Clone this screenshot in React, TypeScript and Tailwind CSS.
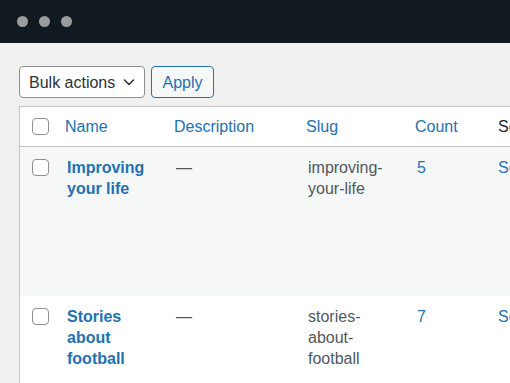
import React from "react";

interface iTerm {
  name: string[];
  slug: string[];
  count: number;
  shaded: boolean;
}

const terms: iTerm[] = [
  { name: ["Improving", "your life"], slug: ["improving-", "your-life"], count: 5, shaded: true },
  { name: ["Stories", "about", "football"], slug: ["stories-", "about-", "football"], count: 7, shaded: false },
];

const cols = "grid grid-cols-[36px_118px_132px_109px_83px_200px]";

const Checkbox = () => (
  <span className="block size-[17px] rounded-[4px] border border-[#8c8f94] bg-white" />
);

const App = () => {
  return (
    <div
      className="w-[510px] h-[383px] overflow-hidden bg-[#f0f0f1] text-[16px] leading-[21px] text-[#50575e]"
      style={{ fontFamily: '"Liberation Sans", Arial, sans-serif' }}
    >
      <div className="h-[43px] bg-[#111a20] flex items-center gap-[11px] pl-[17px]">
        <span className="size-[11px] rounded-full bg-[#9a9c9e]" />
        <span className="size-[11px] rounded-full bg-[#9a9c9e]" />
        <span className="size-[11px] rounded-full bg-[#9a9c9e]" />
      </div>

      <div className="pl-[19px] pt-[23px]">
        <div className="flex gap-[6px] h-[32px]">
          <div className="w-[126px] flex items-center justify-between pl-[9px] pr-[8px] rounded-[4px] border border-[#8c8f94] bg-white text-[#2c3338]">
            <span>Bulk actions</span>
            <svg width="14" height="14" viewBox="0 0 14 14" fill="none">
              <path d="M2.5 5l4.5 4.5L11.5 5" stroke="#2c3338" strokeWidth="1.6" strokeLinecap="round" strokeLinejoin="round" />
            </svg>
          </div>
          <button className="w-[63px] rounded-[4px] border border-[#2271b1] bg-[#f6f7f7] text-[#2271b1]">
            Apply
          </button>
        </div>

        <div className="mt-[8px] w-[700px] border-l border-t border-[#c3c4c7] bg-white">
          <div className={`${cols} h-[40px] items-center border-b border-[#c3c4c7] text-[#2271b1]`}>
            <div className="pl-[12px]">
              <Checkbox />
            </div>
            <div className="pl-[9px]">Name</div>
            <div>Description</div>
            <div>Slug</div>
            <div>Count</div>
            <div className="text-[#1d2327]">Se</div>
          </div>

          {terms.map((t) => (
            <div
              key={t.slug.join("")}
              className={`${cols} pt-[10px] ${t.shaded ? "bg-[#f6f7f7] h-[149px]" : "bg-white h-[100px]"}`}
            >
              <div className="pl-[12px] pt-[2px]">
                <Checkbox />
              </div>
              <div className="pl-[11px] font-bold text-[#2271b1]">
                {t.name.map((n) => (
                  <div key={n}>{n}</div>
                ))}
              </div>
              <div className="pl-[2px]">—</div>
              <div className="pl-[2px]">
                {t.slug.map((s) => (
                  <div key={s}>{s}</div>
                ))}
              </div>
              <div className="pl-[2px] text-[#2271b1]">{t.count}</div>
              <div className="text-[#2271b1]">Se</div>
            </div>
          ))}
        </div>
      </div>
    </div>
  );
};

export default App;
